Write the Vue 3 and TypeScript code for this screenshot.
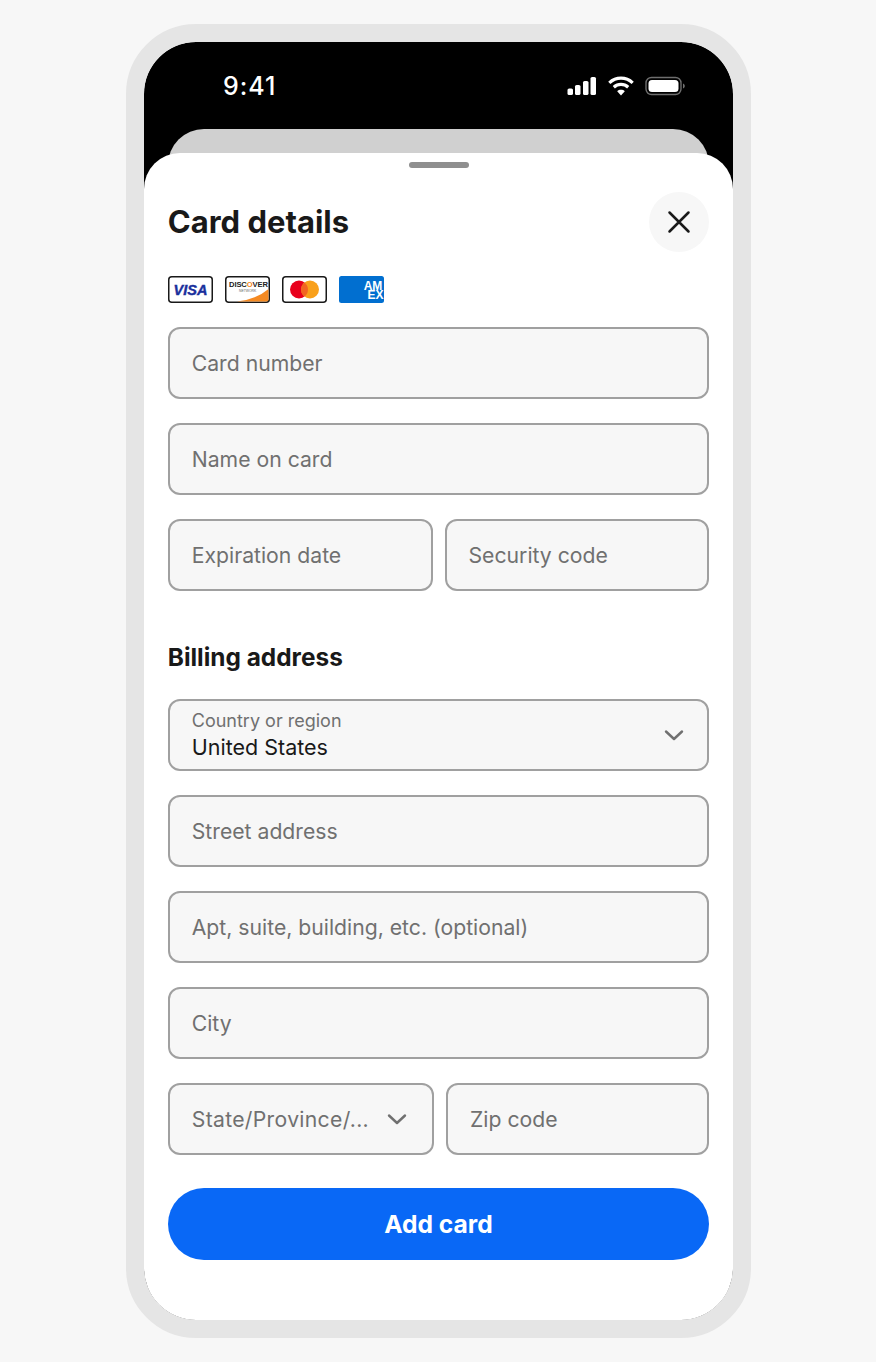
<script setup lang="ts">
// Campos del formulario de dirección que son iguales entre sí
const addressFields: string[] = ["Street address", "Apt, suite, building, etc. (optional)", "City"];
</script>

<template>
  <div class="page">
    <div class="phone">
      <!-- Barra de estado -->
      <div class="status-bar">
        <span class="time">9:41</span>
        <div class="status-icons">
          <svg width="30" height="20" viewBox="0 0 30 20" fill="#fff">
            <rect x="0.5" y="12.5" width="5.5" height="6.5" rx="1.6" />
            <rect x="8" y="9" width="5.5" height="10" rx="1.6" />
            <rect x="16" y="5" width="5.5" height="14" rx="1.6" />
            <rect x="23.5" y="1" width="5.5" height="18" rx="1.6" />
          </svg>
          <svg class="wifi" width="26" height="20" viewBox="0 0 26 20" fill="none" stroke="#fff" stroke-width="3.2">
            <path d="M1.3 6.8C8 0.6 18 0.6 24.7 6.8" />
            <path d="M5.8 11.2C10 7.4 16 7.4 20.2 11.2" />
            <path d="M13 19.4L9.2 15.2C11.2 13.4 14.8 13.4 16.8 15.2Z" fill="#fff" stroke="none" />
          </svg>
          <svg width="40" height="20" viewBox="0 0 40 20" fill="none">
            <rect x="1" y="1.5" width="35" height="17" rx="5.5" stroke="#6e6e6e" stroke-width="1.4" />
            <rect x="3.5" y="4" width="30" height="12" rx="3.5" fill="#fff" />
            <path d="M38 7.5C39.2 8 39.8 9 39.8 10S39.2 12 38 12.5Z" fill="#6e6e6e" />
          </svg>
        </div>
      </div>

      <div class="back-card"></div>

      <!-- Hoja del formulario -->
      <div class="sheet">
        <div class="handle"></div>

        <header class="sheet-header">
          <h1>Card details</h1>
          <button class="close-btn" aria-label="Close">
            <svg width="24" height="24" viewBox="0 0 24 24" fill="none" stroke="#191919" stroke-width="2.5" stroke-linecap="round">
              <path d="M2.5 2.5L21.5 21.5M21.5 2.5L2.5 21.5" />
            </svg>
          </button>
        </header>

        <div class="card-logos">
          <svg width="45" height="27" viewBox="0 0 45 27">
            <rect x=".75" y=".75" width="43.5" height="25.5" rx="3" fill="#fff" stroke="#191919" stroke-width="1.5" />
            <text x="22.5" y="19" text-anchor="middle" class="visa">VISA</text>
          </svg>
          <svg width="45" height="27" viewBox="0 0 45 27">
            <rect x=".75" y=".75" width="43.5" height="25.5" rx="3" fill="#fff" stroke="#191919" stroke-width="1.5" />
            <path d="M12 25.5Q32 23 43.5 13V23.5Q43.5 25.5 41.5 25.5Z" fill="#f58a22" />
            <text x="4" y="11" class="discover">DISC<tspan fill="#f58a22">O</tspan>VER</text>
            <text x="14" y="16" class="network">NETWORK</text>
          </svg>
          <svg width="45" height="27" viewBox="0 0 45 27">
            <rect x=".75" y=".75" width="43.5" height="25.5" rx="3" fill="#fff" stroke="#191919" stroke-width="1.5" />
            <circle cx="17" cy="13.5" r="9" fill="#e8001c" />
            <circle cx="28" cy="13.5" r="9" fill="#f9a01b" />
            <path d="M22.5 6.4a9 9 0 0 1 0 14.2a9 9 0 0 1 0-14.2Z" fill="#f26522" />
          </svg>
          <svg width="45" height="27" viewBox="0 0 45 27">
            <rect width="45" height="27" rx="2.5" fill="#016fd0" />
            <text x="34" y="14" text-anchor="middle" class="amex">AM</text>
            <text x="36.5" y="23" text-anchor="middle" class="amex">EX</text>
          </svg>
        </div>

        <div class="fields">
          <div class="field">Card number</div>
          <div class="field">Name on card</div>
          <div class="field-row">
            <div class="field">Expiration date</div>
            <div class="field">Security code</div>
          </div>
        </div>

        <h2>Billing address</h2>

        <div class="fields billing">
          <div class="field select stacked">
            <div class="stack">
              <span class="small-label">Country or region</span>
              <span class="value">United States</span>
            </div>
            <svg class="chevron" width="20" height="12" viewBox="0 0 20 12" fill="none" stroke="#707070" stroke-width="2.4" stroke-linecap="round" stroke-linejoin="round">
              <path d="M2 2.5L10 10L18 2.5" />
            </svg>
          </div>
          <div v-for="label in addressFields" :key="label" class="field">{{ label }}</div>
          <div class="field-row">
            <div class="field select narrow">
              <span>State/Province/...</span>
              <svg class="chevron" width="20" height="12" viewBox="0 0 20 12" fill="none" stroke="#707070" stroke-width="2.4" stroke-linecap="round" stroke-linejoin="round">
                <path d="M2 2.5L10 10L18 2.5" />
              </svg>
            </div>
            <div class="field">Zip code</div>
          </div>
        </div>

        <button class="submit">Add card</button>
      </div>
    </div>
  </div>
</template>

<style>
body {
  margin: 0;
  background: #f7f7f7;
}
</style>

<style scoped>
.page {
  width: 876px;
  height: 1362px;
  padding-top: 24px;
  box-sizing: border-box;
  background: #f7f7f7;
  font-family: Inter, "Liberation Sans", sans-serif;
  color: #191919;
  overflow: hidden;
}

/* Marco del teléfono */
.phone {
  width: 625.5px;
  height: 1314px;
  margin-left: 125.75px;
  box-sizing: border-box;
  border: 18px solid #e5e5e5;
  border-radius: 70px;
  background: #000;
  overflow: hidden;
  background-clip: padding-box;
}

.status-bar {
  height: 87px;
  display: flex;
  justify-content: space-between;
  align-items: center;
  padding: 0 48.5px 0 79.25px;
  box-sizing: border-box;
}

.time {
  color: #fff;
  font-size: 25px;
  font-weight: 500;
  letter-spacing: 1px;
  margin-top: 1px;
}

.status-icons {
  display: flex;
  align-items: center;
  gap: 11px;
  margin-top: 1px;
}

/* Tarjeta de detrás: parte de ella queda cubierta por la hoja */
.back-card {
  height: 48px;
  margin: 0 24px -24px;
  background: #d0d0d0;
  border-radius: 36px 36px 0 0;
}

.sheet {
  position: relative;
  height: 1167px;
  padding: 9px 24px 0;
  box-sizing: border-box;
  background: #fff;
  border-radius: 36px 36px 0 0;
}

.handle {
  width: 60px;
  height: 6px;
  margin: 0 auto;
  border-radius: 3px;
  background: #8f8f8f;
}

.sheet-header {
  display: flex;
  justify-content: space-between;
  align-items: center;
  margin-top: 24px;
}

h1 {
  margin: 0;
  font-size: 31px;
  font-weight: 700;
  line-height: 40px;
}

.close-btn {
  width: 60px;
  height: 60px;
  padding: 0;
  border: none;
  border-radius: 50%;
  background: #f7f7f7;
  display: flex;
  justify-content: center;
  align-items: center;
}

.card-logos {
  display: flex;
  gap: 12px;
  margin-top: 24px;
}

.card-logos svg {
  display: block;
}

.visa {
  font-family: "Liberation Sans", sans-serif;
  font-size: 14.5px;
  font-weight: 700;
  font-style: italic;
  stroke: #1a2f9c;
  stroke-width: 0.4px;
  fill: #1a2f9c;
}

.discover {
  font-family: "Liberation Sans", sans-serif;
  font-size: 7.6px;
  font-weight: 700;
  letter-spacing: -0.1px;
  fill: #222;
}

.network {
  font-family: "Liberation Sans", sans-serif;
  font-size: 3.4px;
  fill: #666;
}

.amex {
  font-family: "Liberation Sans", sans-serif;
  font-size: 12px;
  font-weight: 700;
  fill: #fff;
}

.fields {
  display: flex;
  flex-direction: column;
  gap: 24px;
  margin-top: 24px;
}

.billing {
  margin-top: 26px;
}

.field-row {
  display: flex;
  gap: 12px;
}

.field {
  height: 72px;
  box-sizing: border-box;
  padding: 0 22px;
  display: flex;
  align-items: center;
  border: 2px solid #a0a0a0;
  border-radius: 12px;
  background: #f7f7f7;
  color: #707070;
  font-size: 21.2px;
}

.field-row .field {
  flex: 1;
  min-width: 0;
}

.select {
  justify-content: space-between;
}

.select .chevron {
  flex: none;
}

.stacked {
  padding-right: 23px;
}

.narrow {
  padding-right: 25px;
}

.narrow span {
  letter-spacing: 0.3px;
  white-space: nowrap;
}

.stack {
  display: flex;
  flex-direction: column;
}

.small-label {
  font-size: 18px;
  line-height: 25px;
}

.value {
  font-size: 21.5px;
  line-height: 29px;
  color: #191919;
}

h2 {
  margin: 50px 0 0;
  font-size: 24.4px;
  font-weight: 700;
  line-height: 32px;
}

.submit {
  display: block;
  width: 100%;
  height: 72px;
  margin-top: 33px;
  border: none;
  border-radius: 36px;
  background: #0968f6;
  color: #fff;
  font-family: inherit;
  font-size: 24.6px;
  font-weight: 700;
}
</style>
